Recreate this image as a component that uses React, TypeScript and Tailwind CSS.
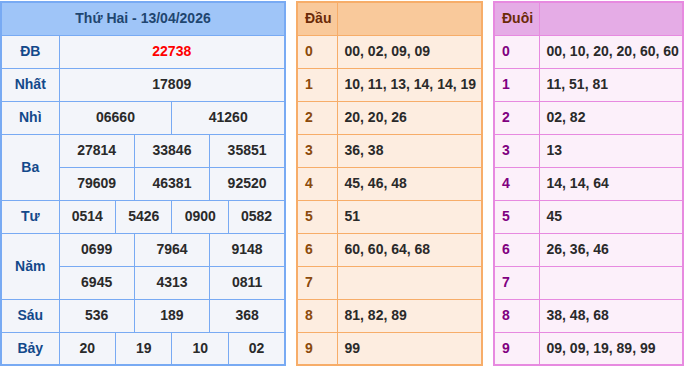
import React from "react";

const font = { fontFamily: '"Liberation Sans", Arial, sans-serif' };

type Cell = { v: string; span: number; red?: boolean };
type Row = { label?: string; rowSpan?: number; cells: Cell[] };

const rows: Row[] = [
  { label: "ĐB", cells: [{ v: "22738", span: 12, red: true }] },
  { label: "Nhất", cells: [{ v: "17809", span: 12 }] },
  { label: "Nhì", cells: [{ v: "06660", span: 6 }, { v: "41260", span: 6 }] },
  { label: "Ba", rowSpan: 2, cells: [{ v: "27814", span: 4 }, { v: "33846", span: 4 }, { v: "35851", span: 4 }] },
  { cells: [{ v: "79609", span: 4 }, { v: "46381", span: 4 }, { v: "92520", span: 4 }] },
  { label: "Tư", cells: [{ v: "0514", span: 3 }, { v: "5426", span: 3 }, { v: "0900", span: 3 }, { v: "0582", span: 3 }] },
  { label: "Năm", rowSpan: 2, cells: [{ v: "0699", span: 4 }, { v: "7964", span: 4 }, { v: "9148", span: 4 }] },
  { cells: [{ v: "6945", span: 4 }, { v: "4313", span: 4 }, { v: "0811", span: 4 }] },
  { label: "Sáu", cells: [{ v: "536", span: 4 }, { v: "189", span: 4 }, { v: "368", span: 4 }] },
  { label: "Bảy", cells: [{ v: "20", span: 3 }, { v: "19", span: 3 }, { v: "10", span: 3 }, { v: "02", span: 3 }] },
];

const dau = [
  "00, 02, 09, 09",
  "10, 11, 13, 14, 14, 19",
  "20, 20, 26",
  "36, 38",
  "45, 46, 48",
  "51",
  "60, 60, 64, 68",
  "",
  "81, 82, 89",
  "99",
];

const duoi = [
  "00, 10, 20, 20, 60, 60",
  "11, 51, 81",
  "02, 82",
  "13",
  "14, 14, 64",
  "45",
  "26, 36, 46",
  "",
  "38, 48, 68",
  "09, 09, 19, 89, 99",
];

function ResultTable() {
  return (
    <table
      className="w-[286px] shrink-0 table-fixed border-collapse border-2 border-[#78aaf3] bg-[#f3f5fa] text-[14px] font-bold"
      style={font}
    >
      <colgroup>
        <col className="w-[58px]" />
        {Array.from({ length: 12 }).map((_, i) => (
          <col key={i} />
        ))}
      </colgroup>
      <thead>
        <tr className="h-[33px]">
          <th colSpan={13} className="border border-[#78aaf3] bg-[#9fc5f8] text-center text-[#1f4670]">
            Thứ Hai - 13/04/2026
          </th>
        </tr>
      </thead>
      <tbody>
        {rows.map((r, i) => (
          <tr key={i} className="h-[33px]">
            {r.label !== undefined && (
              <td rowSpan={r.rowSpan} className="border border-[#78aaf3] text-center text-[#13498a]">
                {r.label}
              </td>
            )}
            {r.cells.map((c, j) => (
              <td
                key={j}
                colSpan={c.span}
                className={`border border-[#78aaf3] text-center ${c.red ? "text-[#ff0000]" : "text-[#2a2a2a]"}`}
              >
                {c.v}
              </td>
            ))}
          </tr>
        ))}
      </tbody>
    </table>
  );
}

function LotoTable({
  title,
  data,
  variant,
}: {
  title: string;
  data: string[];
  variant: "dau" | "duoi";
}) {
  const isDau = variant === "dau";
  const border = isDau ? "border-[#f7ad69]" : "border-[#e78ae0]";
  return (
    <table
      className={`table-fixed border-collapse border-2 text-[14px] font-bold ${
        isDau ? "w-[187px] border-[#f7ad69] bg-[#fdede0]" : "w-[191px] border-[#e78ae0] bg-[#fcf0fa]"
      }`}
      style={font}
    >
      <colgroup>
        <col className={isDau ? "w-[40px]" : "w-[45px]"} />
        <col />
      </colgroup>
      <thead>
        <tr className="h-[33px]">
          <th
            className={`border ${border} pl-[7px] text-left text-[#6b2a08] ${
              isDau ? "bg-[#f9c99b]" : "bg-[#e5ace6]"
            }`}
          >
            {title}
          </th>
          <th className={`border ${border} ${isDau ? "bg-[#f9c99b]" : "bg-[#e5ace6]"}`}></th>
        </tr>
      </thead>
      <tbody>
        {data.map((d, i) => (
          <tr key={i} className="h-[33px]">
            <td className={`border ${border} pl-[7px] ${isDau ? "text-[#8b4a0c]" : "text-[#800080]"}`}>{i}</td>
            <td className={`border ${border} pl-[7px] text-[#2a2a2a]`}>{d}</td>
          </tr>
        ))}
      </tbody>
    </table>
  );
}

export default function App() {
  return (
    <div className="flex h-[370px] w-[687px] items-start gap-[10px] bg-white pt-px">
      <ResultTable />
      <LotoTable title="Đầu" data={dau} variant="dau" />
      <LotoTable title="Đuôi" data={duoi} variant="duoi" />
    </div>
  );
}
